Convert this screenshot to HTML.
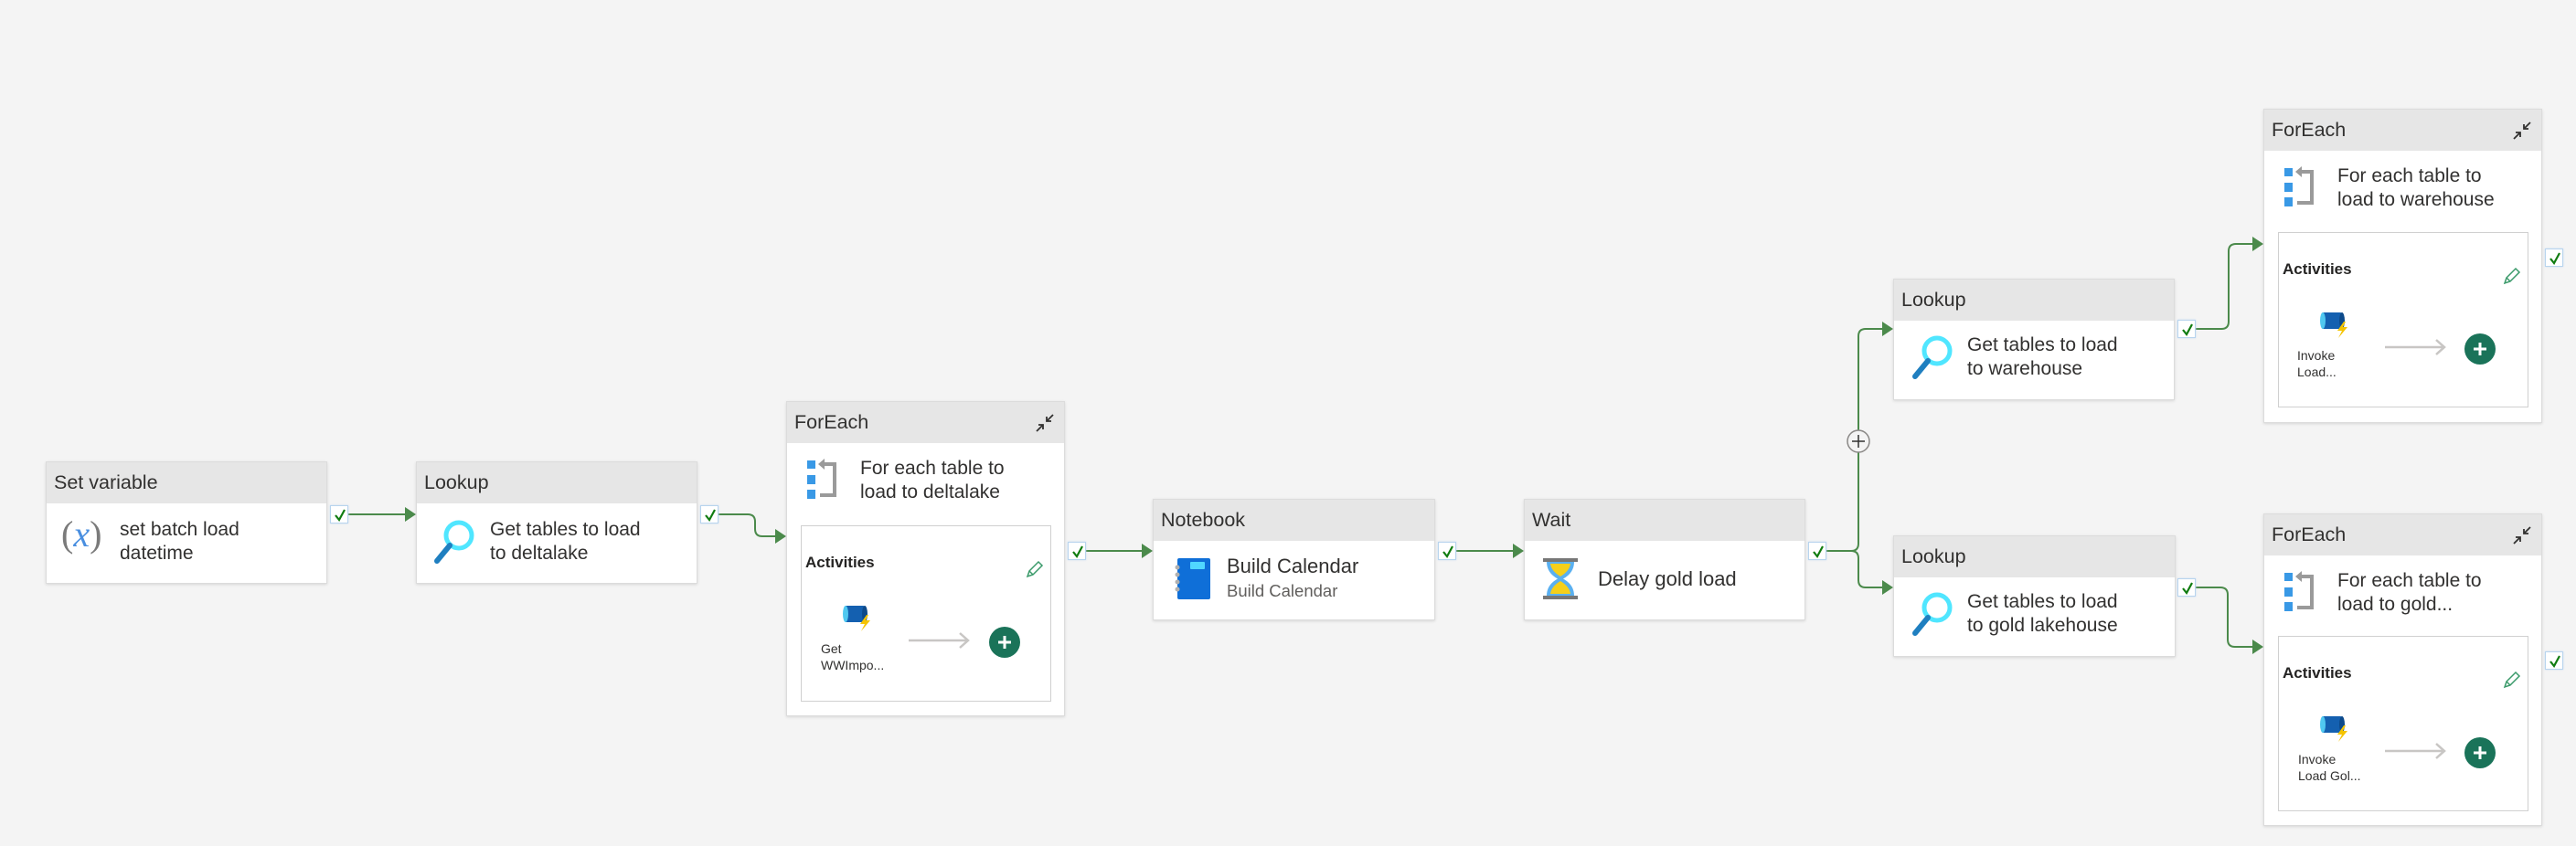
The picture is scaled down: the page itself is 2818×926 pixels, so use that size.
<!DOCTYPE html>
<html><head><meta charset="utf-8">
<style>
*{box-sizing:border-box;margin:0;padding:0}
body{width:2818px;height:926px;background:#f4f4f4;position:relative;overflow:hidden;font-family:"Liberation Sans",sans-serif;color:#323130}
.card{position:absolute;background:#fff;border:1px solid #dcdcdc;box-shadow:0 1px 3px rgba(0,0,0,.12)}
.hd{height:45px;background:#e6e6e6;font-size:21.5px;line-height:45px;padding-left:8px;color:#323130;position:relative}
.bt{position:absolute;font-size:21px;line-height:26px;color:#323130}
.chk{position:absolute;width:20px;height:20px;background:#fff;border:1px solid #b8d4ee;box-shadow:0 0 2px #c8dcf0}
.inner{position:absolute;border:1px solid #d0d0d0;background:#fff}
.act{position:absolute;font-size:17px;font-weight:bold;color:#252423}
.small{position:absolute;font-size:14px;line-height:18px;color:#323130}
svg{position:absolute;overflow:visible}
</style></head><body>

<svg width="2818" height="926" style="left:0;top:0">
<g fill="none" stroke="#4b8a4b" stroke-width="2">
<path d="M381 563H445"/>
<path d="M786 563H818Q826 563 826 571V579Q826 587 834 587H850"/>
<path d="M1188 603H1251"/>
<path d="M1593 603H1657"/>
<path d="M1998 603H2025Q2033 603 2033 595V368Q2033 360 2041 360H2061"/>
<path d="M2025 603Q2033 603 2033 611V635Q2033 643 2041 643H2061"/>
<path d="M2402 360H2430Q2438 360 2438 352V275Q2438 267 2446 267H2466"/>
<path d="M2402 643H2429Q2437 643 2437 651V700Q2437 708 2445 708H2466"/>
</g>
<g fill="#4b8a4b">
<path d="M443 555L455 563L443 571Z"/>
<path d="M848 579L860 587L848 595Z"/>
<path d="M1249 595L1261 603L1249 611Z"/>
<path d="M1655 595L1667 603L1655 611Z"/>
<path d="M2059 352L2071 360L2059 368Z"/>
<path d="M2059 635L2071 643L2059 651Z"/>
<path d="M2464 259L2476 267L2464 275Z"/>
<path d="M2464 700L2476 708L2464 716Z"/>
</g>
<circle cx="2033" cy="483" r="12" fill="#f4f4f4" stroke="#8a8886" stroke-width="1.5"/>
<path d="M2026 483H2040M2033 476V490" stroke="#323130" stroke-width="1.5"/>
</svg>

<!-- Set variable -->
<div class="card" style="left:50px;top:505px;width:308px;height:134px">
<div class="hd">Set variable</div>
<div style="position:absolute;left:16px;top:54px;font-family:'Liberation Serif',serif;font-size:40px;color:#7a7a7a;line-height:50px">(<span style="color:#4a8fe0;font-style:italic">x</span>)</div>
<div class="bt" style="left:80px;top:61px">set batch load<br>datetime</div>
</div>
<div class="chk" style="left:361px;top:553px"><svg width="20" height="20" style="left:0;top:0"><path d="M5 10L9 15L15 4" fill="none" stroke="#107c10" stroke-width="2.2"/></svg></div>

<!-- Lookup 1 -->
<div class="card" style="left:455px;top:505px;width:308px;height:134px">
<div class="hd">Lookup</div>
<svg width="50" height="50" style="left:16px;top:62px"><circle cx="30" cy="18" r="14" fill="none" stroke="#50e6ff" stroke-width="5"/><path d="M20 29L6 46" stroke="#1f7fc0" stroke-width="6" stroke-linecap="round"/></svg>
<div class="bt" style="left:80px;top:61px">Get tables to load<br>to deltalake</div>
</div>
<div class="chk" style="left:766px;top:553px"><svg width="20" height="20" style="left:0;top:0"><path d="M5 10L9 15L15 4" fill="none" stroke="#107c10" stroke-width="2.2"/></svg></div>

<!-- ForEach 1 -->
<div class="card" style="left:860px;top:439px;width:305px;height:345px">
<div class="hd">ForEach<svg width="22" height="22" style="left:271px;top:12px"><path d="M20 2L13 9M13 4V9H18M2 20L9 13M9 18V13H4" fill="none" stroke="#323130" stroke-width="1.8"/></svg></div>
<svg width="36" height="46" style="left:22px;top:64px"><rect x="0" y="0" width="9" height="9" fill="#3999e6"/><rect x="0" y="16" width="9" height="10" fill="#3999e6"/><rect x="0" y="32" width="9" height="10" fill="#3999e6"/><path d="M16 4H30V38H14" fill="none" stroke="#9a9a9a" stroke-width="4"/><path d="M12 4L19 -2V10Z" fill="#9a9a9a"/></svg>
<div class="bt" style="left:80px;top:60px">For each table to<br>load to deltalake</div>
<div class="inner" style="left:15px;top:135px;width:274px;height:193px">
<div class="act" style="left:4px;top:30px">Activities</div>
<svg width="20" height="20" style="left:244px;top:38px"><path d="M3 17L5 11L15 1L19 5L9 15Z M5 11L9 15" fill="none" stroke="#3a9a6a" stroke-width="1.5"/></svg>
<svg width="36" height="32" style="left:43px;top:83px"><rect x="4" y="4" width="22" height="18" rx="2" fill="#1460b0"/><ellipse cx="5" cy="13" rx="3" ry="9" fill="#50c8f0"/><ellipse cx="26" cy="13" rx="3" ry="9" fill="#0d4a8a"/><path d="M28 14L21 24H26L22 32L32 20H27L30 14Z" fill="#f5c400"/></svg>
<div class="small" style="left:21px;top:125px">Get<br>WWImpo...</div>
<svg width="70" height="20" style="left:117px;top:115px"><path d="M0 10H64M56 2L65 10L56 18" fill="none" stroke="#c8c6c4" stroke-width="2.5"/></svg>
<svg width="36" height="36" style="left:204px;top:109px"><circle cx="18" cy="18" r="17" fill="#1a7359"/><path d="M18 11V25M11 18H25" stroke="#fff" stroke-width="3"/></svg>
</div>
</div>
<div class="chk" style="left:1168px;top:593px"><svg width="20" height="20" style="left:0;top:0"><path d="M5 10L9 15L15 4" fill="none" stroke="#107c10" stroke-width="2.2"/></svg></div>

<!-- Notebook -->
<div class="card" style="left:1261px;top:546px;width:309px;height:133px">
<div class="hd">Notebook</div>
<svg width="42" height="46" style="left:22px;top:64px"><rect x="4" y="0" width="36" height="45" rx="2" fill="#0f6fd8"/><rect x="18" y="4" width="16" height="8" rx="1" fill="#50d8ff"/><g fill="#b0b0b0"><circle cx="4" cy="10" r="2.5"/><circle cx="4" cy="18" r="2.5"/><circle cx="4" cy="26" r="2.5"/><circle cx="4" cy="34" r="2.5"/></g></svg>
<div class="bt" style="left:80px;top:60px;font-size:22px">Build Calendar</div>
<div class="bt" style="left:80px;top:87px;font-size:18.5px;color:#605e5c">Build Calendar</div>
</div>
<div class="chk" style="left:1573px;top:593px"><svg width="20" height="20" style="left:0;top:0"><path d="M5 10L9 15L15 4" fill="none" stroke="#107c10" stroke-width="2.2"/></svg></div>

<!-- Wait -->
<div class="card" style="left:1667px;top:546px;width:308px;height:133px">
<div class="hd">Wait</div>
<svg width="40" height="46" style="left:20px;top:64px"><rect x="0" y="0" width="38" height="4" fill="#777"/><rect x="0" y="41" width="38" height="4" fill="#777"/><path d="M4 4H34Q34 16 22 22.5Q34 29 34 41H4Q4 29 16 22.5Q4 16 4 4Z" fill="#5ab0f0"/><path d="M8 6H30Q29 14 19 20Q9 14 8 6Z M19 25Q29 31 30 39H8Q9 31 19 25Z" fill="#f5cf1a"/></svg>
<div class="bt" style="left:80px;top:74px;font-size:22px">Delay gold load</div>
</div>
<div class="chk" style="left:1978px;top:593px"><svg width="20" height="20" style="left:0;top:0"><path d="M5 10L9 15L15 4" fill="none" stroke="#107c10" stroke-width="2.2"/></svg></div>

<!-- Lookup warehouse -->
<div class="card" style="left:2071px;top:305px;width:308px;height:133px">
<div class="hd">Lookup</div>
<svg width="50" height="50" style="left:17px;top:60px"><circle cx="30" cy="18" r="14" fill="none" stroke="#50e6ff" stroke-width="5"/><path d="M20 29L6 46" stroke="#1f7fc0" stroke-width="6" stroke-linecap="round"/></svg>
<div class="bt" style="left:80px;top:59px">Get tables to load<br>to warehouse</div>
</div>
<div class="chk" style="left:2382px;top:350px"><svg width="20" height="20" style="left:0;top:0"><path d="M5 10L9 15L15 4" fill="none" stroke="#107c10" stroke-width="2.2"/></svg></div>

<!-- Lookup gold -->
<div class="card" style="left:2071px;top:586px;width:309px;height:133px">
<div class="hd">Lookup</div>
<svg width="50" height="50" style="left:17px;top:60px"><circle cx="30" cy="18" r="14" fill="none" stroke="#50e6ff" stroke-width="5"/><path d="M20 29L6 46" stroke="#1f7fc0" stroke-width="6" stroke-linecap="round"/></svg>
<div class="bt" style="left:80px;top:59px">Get tables to load<br>to gold lakehouse</div>
</div>
<div class="chk" style="left:2382px;top:633px"><svg width="20" height="20" style="left:0;top:0"><path d="M5 10L9 15L15 4" fill="none" stroke="#107c10" stroke-width="2.2"/></svg></div>

<!-- ForEach warehouse -->
<div class="card" style="left:2476px;top:119px;width:305px;height:344px">
<div class="hd">ForEach<svg width="22" height="22" style="left:271px;top:12px"><path d="M20 2L13 9M13 4V9H18M2 20L9 13M9 18V13H4" fill="none" stroke="#323130" stroke-width="1.8"/></svg></div>
<svg width="36" height="46" style="left:22px;top:64px"><rect x="0" y="0" width="9" height="9" fill="#3999e6"/><rect x="0" y="16" width="9" height="10" fill="#3999e6"/><rect x="0" y="32" width="9" height="10" fill="#3999e6"/><path d="M16 4H30V38H14" fill="none" stroke="#9a9a9a" stroke-width="4"/><path d="M12 4L19 -2V10Z" fill="#9a9a9a"/></svg>
<div class="bt" style="left:80px;top:60px">For each table to<br>load to warehouse</div>
<div class="inner" style="left:15px;top:134px;width:274px;height:192px">
<div class="act" style="left:4px;top:30px">Activities</div>
<svg width="20" height="20" style="left:244px;top:38px"><path d="M3 17L5 11L15 1L19 5L9 15Z M5 11L9 15" fill="none" stroke="#3a9a6a" stroke-width="1.5"/></svg>
<svg width="36" height="32" style="left:43px;top:83px"><rect x="4" y="4" width="22" height="18" rx="2" fill="#1460b0"/><ellipse cx="5" cy="13" rx="3" ry="9" fill="#50c8f0"/><ellipse cx="26" cy="13" rx="3" ry="9" fill="#0d4a8a"/><path d="M28 14L21 24H26L22 32L32 20H27L30 14Z" fill="#f5c400"/></svg>
<div class="small" style="left:20px;top:125px">Invoke<br>Load...</div>
<svg width="70" height="20" style="left:116px;top:115px"><path d="M0 10H64M56 2L65 10L56 18" fill="none" stroke="#c8c6c4" stroke-width="2.5"/></svg>
<svg width="36" height="36" style="left:202px;top:109px"><circle cx="18" cy="18" r="17" fill="#1a7359"/><path d="M18 11V25M11 18H25" stroke="#fff" stroke-width="3"/></svg>
</div>
</div>
<div class="chk" style="left:2784px;top:272px"><svg width="20" height="20" style="left:0;top:0"><path d="M5 10L9 15L15 4" fill="none" stroke="#107c10" stroke-width="2.2"/></svg></div>

<!-- ForEach gold -->
<div class="card" style="left:2476px;top:562px;width:305px;height:342px">
<div class="hd">ForEach<svg width="22" height="22" style="left:271px;top:12px"><path d="M20 2L13 9M13 4V9H18M2 20L9 13M9 18V13H4" fill="none" stroke="#323130" stroke-width="1.8"/></svg></div>
<svg width="36" height="46" style="left:22px;top:64px"><rect x="0" y="0" width="9" height="9" fill="#3999e6"/><rect x="0" y="16" width="9" height="10" fill="#3999e6"/><rect x="0" y="32" width="9" height="10" fill="#3999e6"/><path d="M16 4H30V38H14" fill="none" stroke="#9a9a9a" stroke-width="4"/><path d="M12 4L19 -2V10Z" fill="#9a9a9a"/></svg>
<div class="bt" style="left:80px;top:60px">For each table to<br>load to gold...</div>
<div class="inner" style="left:15px;top:133px;width:274px;height:192px">
<div class="act" style="left:4px;top:30px">Activities</div>
<svg width="20" height="20" style="left:244px;top:38px"><path d="M3 17L5 11L15 1L19 5L9 15Z M5 11L9 15" fill="none" stroke="#3a9a6a" stroke-width="1.5"/></svg>
<svg width="36" height="32" style="left:43px;top:83px"><rect x="4" y="4" width="22" height="18" rx="2" fill="#1460b0"/><ellipse cx="5" cy="13" rx="3" ry="9" fill="#50c8f0"/><ellipse cx="26" cy="13" rx="3" ry="9" fill="#0d4a8a"/><path d="M28 14L21 24H26L22 32L32 20H27L30 14Z" fill="#f5c400"/></svg>
<div class="small" style="left:21px;top:125px">Invoke<br>Load Gol...</div>
<svg width="70" height="20" style="left:116px;top:115px"><path d="M0 10H64M56 2L65 10L56 18" fill="none" stroke="#c8c6c4" stroke-width="2.5"/></svg>
<svg width="36" height="36" style="left:202px;top:109px"><circle cx="18" cy="18" r="17" fill="#1a7359"/><path d="M18 11V25M11 18H25" stroke="#fff" stroke-width="3"/></svg>
</div>
</div>
<div class="chk" style="left:2784px;top:713px"><svg width="20" height="20" style="left:0;top:0"><path d="M5 10L9 15L15 4" fill="none" stroke="#107c10" stroke-width="2.2"/></svg></div>

</body></html>
